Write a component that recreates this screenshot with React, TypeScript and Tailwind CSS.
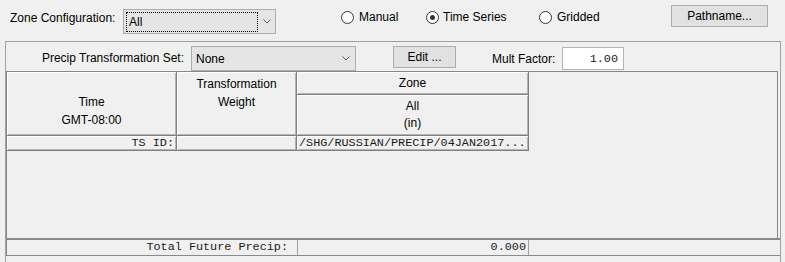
import React from "react";

const Chevron = () => (
  <svg width="8" height="5" viewBox="0 0 8 5" className="block">
    <polyline points="0.5,0.5 4,4 7.5,0.5" fill="none" stroke="#5a5a5a" strokeWidth="1" />
  </svg>
);

const hdr =
  "border-b border-r border-[#808080] shadow-[inset_1px_1px_0_#ffffff,inset_-1px_-1px_0_#b4b4b4]";

export default function App() {
  return (
    <div className="h-[262px] w-[785px] overflow-hidden bg-[#f0f0f0] font-['Liberation_Sans',Arial,sans-serif] text-[12px] leading-[14px] text-black">
      {/* top row */}
      <div className="flex h-[41px] items-start">
        <div className="ml-[10px] mt-[11px] w-[113px] whitespace-nowrap">Zone Configuration:</div>
        <div className="mt-[9px] flex h-[25px] w-[153px] items-center border border-[#adadad] bg-[#e5e5e5]">
          <div className="ml-[2px] h-[20px] w-[132px] border border-dotted border-black pl-[2px] pt-[2px]">All</div>
          <div className="ml-[5px]">
            <Chevron />
          </div>
        </div>
        <div className="ml-[65px] mt-[10px] flex h-[14px] w-[85px] items-center">
          <span className="h-[13px] w-[13px] shrink-0 rounded-full border border-[#333333] bg-white" />
          <span className="ml-[5px]">Manual</span>
        </div>
        <div className="mt-[10px] flex h-[14px] w-[113px] items-center">
          <span className="flex h-[13px] w-[13px] shrink-0 items-center justify-center rounded-full border border-[#333333] bg-white">
            <span className="h-[5px] w-[5px] rounded-full bg-[#333333]" />
          </span>
          <span className="ml-[4px]">Time Series</span>
        </div>
        <div className="mt-[10px] flex h-[14px] w-[132px] items-center">
          <span className="h-[13px] w-[13px] shrink-0 rounded-full border border-[#333333] bg-white" />
          <span className="ml-[5px]">Gridded</span>
        </div>
        <div className="mt-[5px] flex h-[22px] w-[97px] items-center justify-center border border-[#adadad] bg-[#e1e1e1]">
          Pathname...
        </div>
      </div>

      {/* panel */}
      <div className="ml-[5px] h-[221px] w-[776px] border-l border-r border-t border-[#a0a0a0]">
        <div className="flex h-[29px] items-start">
          <div className="mt-[9px] w-[180px] whitespace-nowrap pr-[2px] text-right">Precip Transformation Set:</div>
          <div className="ml-[5px] mt-[4px] flex h-[25px] w-[165px] items-center justify-between border border-[#adadad] bg-[#e5e5e5] pl-[4px] pr-[5px]">
            <span>None</span>
            <Chevron />
          </div>
          <div className="ml-[37px] mt-[4px] flex h-[22px] w-[63px] items-center justify-center border border-[#adadad] bg-[#e1e1e1]">
            Edit ...
          </div>
          <div className="ml-[36px] mt-[10px] w-[70px] whitespace-nowrap">Mult Factor:</div>
          <div className="mt-[5px] flex h-[23px] w-[62px] items-center justify-end border border-[#b4b4b4] bg-white pr-[5px] font-['Liberation_Mono',monospace] text-[11.8px] text-[#202020]">
            1.00
          </div>
        </div>

        {/* scroll pane */}
        <div className="h-[167px] w-[772px] border-l border-r border-t border-[#828790]">
          <div className="flex h-[64px]">
            <div className={`${hdr} flex w-[170px] flex-col items-center pt-[3px] leading-[18px]`}>
              <span>&nbsp;</span>
              <span>Time</span>
              <span>GMT-08:00</span>
            </div>
            <div className={`${hdr} flex w-[120px] flex-col items-center pt-[3px] leading-[18px]`}>
              <span>Transformation</span>
              <span>Weight</span>
            </div>
            <div className="flex w-[232px] flex-col">
              <div className={`${hdr} flex h-[23px] items-center justify-center`}>Zone</div>
              <div className={`${hdr} flex flex-1 flex-col items-center justify-center leading-[17px]`}>
                <span>All</span>
                <span>(in)</span>
              </div>
            </div>
          </div>
          <div className="flex h-[15px] font-['Liberation_Mono',monospace] text-[11.8px] leading-[13px] text-[#1a1a1a]">
            <div className={`${hdr} flex w-[170px] items-center justify-end pr-[2px]`}>TS ID:</div>
            <div className={`${hdr} w-[120px]`} />
            <div className={`${hdr} flex w-[232px] items-center overflow-hidden whitespace-nowrap pl-[2px]`}>
              /SHG/RUSSIAN/PRECIP/04JAN2017...
            </div>
          </div>
        </div>

        {/* totals row */}
        <div className="flex h-[18px] border-b border-l border-t-2 border-[#878a8e] font-['Liberation_Mono',monospace] text-[11.8px] leading-[13px] text-[#1a1a1a]">
          <div className="flex w-[291px] items-center justify-end border-r border-[#a0a0a0] pr-[9px]">
            Total Future Precip:
          </div>
          <div className="flex w-[231px] items-center justify-end border-r border-[#a0a0a0] pr-[2px]">0.000</div>
        </div>
      </div>
    </div>
  );
}
